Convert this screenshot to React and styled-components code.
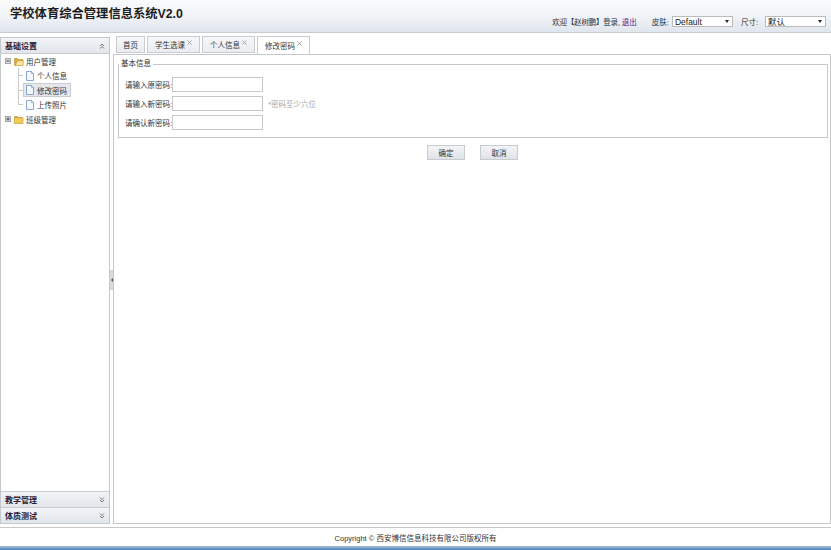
import React from "react";
import styled, { createGlobalStyle } from "styled-components";

const FONT = `"Liberation Sans", "Noto Sans CJK SC", sans-serif`;

const Global = createGlobalStyle`
  html, body { margin: 0; padding: 0; background: #fff; }
  body { font: 7.5px ${FONT}; color: #333; }
  * { box-sizing: border-box; }
`;

const Page = styled.div`
  width: 831px;
  height: 550px;
  display: flex;
  flex-direction: column;
  overflow: hidden;
`;

const Header = styled.header`
  flex: 0 0 33px;
  display: flex;
  justify-content: space-between;
  padding: 0 5px 0 10px;
  background: linear-gradient(#fafbfc, #f3f5f8 40%, #e0e6ee);
  border-bottom: 1px solid #c8ccd0;
`;

const Title = styled.h1`
  margin: 5px 0 0;
  font-size: 12.3px;
  line-height: 18px;
  font-weight: bold;
  color: #1c1c1c;
`;

const Status = styled.div`
  display: flex;
  align-items: center;
  align-self: flex-end;
  height: 11px;
  margin-bottom: 5px;
  color: #333;
`;

const Welcome = styled.span`
  letter-spacing: -0.2px;
`;

const Exit = styled.a`
  color: #551a8b;
  margin-left: 2px;
`;

const Skin = styled.span`
  margin-left: ${(p) => p.$gap}px;
  margin-right: ${(p) => p.$after}px;
`;

const PickerWrap = styled.span`
  position: relative;
  display: block;
  width: 61px;
  height: 11px;
  &::after {
    content: "";
    position: absolute;
    right: 4px;
    top: 4px;
    border-style: solid;
    border-width: 3px 2px 0;
    border-color: #222 transparent transparent;
    pointer-events: none;
  }
`;

const Picker = styled.select`
  display: block;
  appearance: none;
  width: 100%;
  height: 100%;
  padding: 0 0 0 2px;
  font: 8.5px ${FONT};
  color: #222;
  background: #fff;
  border: 1px solid #bbb;
  border-radius: 0;
`;

const Main = styled.main`
  flex: 1;
  min-height: 0;
  display: flex;
  padding: 3px 0;
`;

const Sidebar = styled.aside`
  flex: 0 0 110px;
  margin-top: 1px;
  display: flex;
  flex-direction: column;
  border: 1px solid #c4c7cb;
  background: #fff;
`;

const AccHead = styled.div`
  flex: 0 0 16px;
  display: flex;
  align-items: center;
  justify-content: space-between;
  padding: 0 4px 0 4px;
  font-size: 8px;
  font-weight: bold;
  color: #2b2238;
  background: linear-gradient(#f2f4f6, #e1e6eb);
  border-top: ${(p) => (p.$ruled ? "1px solid #c8cbcf" : "0")};
  border-bottom: ${(p) => (p.$open ? "1px solid #c8cbcf" : "0")};
`;

const Tree = styled.ul`
  flex: 1;
  margin: 0;
  padding: 0 0 0 3px;
  list-style: none;
`;

const TreeRow = styled.li`
  height: 14.5px;
  display: flex;
  align-items: center;
  color: #333;
`;

const Selected = styled.span`
  display: flex;
  align-items: center;
  gap: 3px;
  height: 14px;
  padding: 0 4px 0 3px;
  background: ${(p) => (p.$active ? "#e6e7ec" : "transparent")};
  outline: ${(p) => (p.$active ? "1px solid #c9ccd3" : "none")};
  outline-offset: -1px;
`;

const Splitter = styled.div`
  flex: 0 0 3px;
  display: flex;
  align-items: center;
`;

const Handle = styled.div`
  width: 3px;
  height: 20px;
  background: #d8d8d8;
  display: flex;
  align-items: center;
  justify-content: center;
  &::after {
    content: "";
    border: 2px solid transparent;
    border-right: 2px solid #555;
    border-left: 0;
  }
`;

const Content = styled.section`
  flex: 1;
  display: flex;
  flex-direction: column;
  min-width: 0;
`;

const TabBar = styled.nav`
  flex: 0 0 17px;
  display: flex;
  gap: 2px;
  padding-left: 3px;
  position: relative;
  z-index: 1;
`;

const Tab = styled.div`
  height: ${(p) => (p.$active ? 18 : 17)}px;
  display: flex;
  align-items: center;
  justify-content: ${(p) => (p.$plain ? "center" : "flex-start")};
  width: ${(p) => (p.$plain ? 29 : 53)}px;
  padding-left: ${(p) => (p.$plain ? 0 : 7)}px;
  color: #333;
  border: 1px solid #c8cbcf;
  border-bottom: ${(p) => (p.$active ? "0" : "1px solid #c8cbcf")};
  background: ${(p) => (p.$active ? "#fff" : "linear-gradient(#f6f7f9, #e9ecf0)")};
`;

const Close = styled.svg`
  width: 5px;
  height: 5px;
  margin: -4px 0 0 2px;
  stroke: #a5a5a5;
  stroke-width: 1;
  fill: none;
`;

const Panel = styled.div`
  flex: 1;
  border: 1px solid #c4c7cb;
  padding: 4px 2px 0 4px;
  background: #fff;
`;

const Fieldset = styled.fieldset`
  margin: 0;
  padding: 8px 0 0 6px;
  height: 79px;
  border: 1px solid #c4c7cb;
  min-width: 0;
`;

const Legend = styled.legend`
  margin-left: -6px;
  padding: 0 2px;
  color: #333;
  line-height: 10px;
`;

const FormRow = styled.div`
  display: flex;
  align-items: center;
  height: 15px;
  margin-bottom: 4px;
  color: #333;
`;

const Label = styled.label`
  width: 47px;
  white-space: nowrap;
`;

const Field = styled.input`
  width: 91px;
  height: 15px;
  padding: 0 2px;
  border: 1px solid #c4c7cb;
  background: #fff;
`;

const Hint = styled.span`
  margin-left: 5px;
  color: #a8a8a8;
`;

const Actions = styled.div`
  display: flex;
  justify-content: center;
  gap: 15px;
  margin-top: 7px;
  padding-right: 1px;
`;

const Btn = styled.button`
  width: 38px;
  height: 15px;
  padding: 0;
  font: 7.5px ${FONT};
  color: #333;
  border: 1px solid #c8cbcf;
  background: linear-gradient(#f3f4f6, #dfe3e8);
`;

const Footer = styled.footer`
  flex: 0 0 19px;
  display: flex;
  align-items: center;
  justify-content: center;
  padding-top: 1px;
  border-top: 1px solid #c8c8c8;
  color: #333;
  background: #fff;
`;

const Strip = styled.div`
  flex: 0 0 4px;
  background: linear-gradient(#a9c2dc, #4f81b8);
`;

const Chevrons = ({ up }) => (
  <svg width="6" height="6" viewBox="0 0 6 6" fill="none" stroke="#777" strokeWidth="1">
    {up ? (
      <path d="M1 3l2-2 2 2M1 5.5l2-2 2 2" />
    ) : (
      <path d="M1 .5l2 2 2-2M1 3l2 2 2-2" />
    )}
  </svg>
);

const Expander = ({ open }) => (
  <svg width="8" height="8" viewBox="0 0 8 8" style={{ flex: "none" }}>
    <rect x="1.5" y="1.5" width="5" height="5" fill="#d9dcdf" stroke="#a5a5a5" />
    <path d={open ? "M2.5 4h3" : "M2.5 4h3M4 2.5v3"} stroke="#444" fill="none" />
  </svg>
);

const Folder = ({ open }) => (
  <svg width="10" height="9" viewBox="0 0 10 9" style={{ margin: "0 2px 0 2px", flex: "none" }}>
    <path d="M.5 1.5h3l1 1h4.5v6H.5z" fill="#d9ad3f" stroke="#b98f30" strokeWidth=".6" />
    <path
      d={open ? "M1.5 8.5l2-4.5h6.2l-1.5 4.5z" : "M.8 3.2h8v5H.8z"}
      fill={open ? "#fbe7a4" : "#f0cb55"}
      stroke={open ? "#c9a44a" : "none"}
      strokeWidth=".5"
    />
  </svg>
);

const Elbow = ({ last }) => (
  <svg width="19" height="15" viewBox="0 0 19 15" style={{ flex: "none" }}>
    <path d={last ? "M14.5 0v7.5h4.5" : "M14.5 0v15M14.5 7.5h4.5"} stroke="#c8c8c8" fill="none" />
  </svg>
);

const Doc = () => (
  <svg width="8" height="10" viewBox="0 0 8 10" style={{ flex: "none" }}>
    <path d="M.5.5h5l2 2v7h-7z" fill="#f4f8fd" stroke="#6d93c4" strokeWidth=".8" />
    <path d="M5.5.5v2h2" fill="#cfe0f3" stroke="#6d93c4" strokeWidth=".6" />
  </svg>
);

const X = () => (
  <Close viewBox="0 0 5 5">
    <path d="M.5.5l4 4M4.5.5l-4 4" />
  </Close>
);

const children = [
  { name: "个人信息" },
  { name: "修改密码", active: true },
  { name: "上传照片", last: true },
];

const fields = [
  { label: "请输入原密码:" },
  { label: "请输入新密码:", hint: "*密码至少六位" },
  { label: "请确认新密码:" },
];

export default function App() {
  return (
    <Page>
      <Global />
      <Header>
        <Title>学校体育综合管理信息系统V2.0</Title>
        <Status>
          <Welcome>欢迎【赵树鹏】登录,</Welcome>
          <Exit>退出</Exit>
          <Skin $gap={15} $after={3}>皮肤:</Skin>
          <PickerWrap>
            <Picker defaultValue="Default">
              <option>Default</option>
            </Picker>
          </PickerWrap>
          <Skin $gap={8} $after={7}>尺寸:</Skin>
          <PickerWrap>
            <Picker defaultValue="默认">
              <option>默认</option>
            </Picker>
          </PickerWrap>
        </Status>
      </Header>
      <Main>
        <Sidebar>
          <AccHead $open>
            基础设置
            <Chevrons up />
          </AccHead>
          <Tree>
            <TreeRow>
              <Expander open />
              <Folder open />
              用户管理
            </TreeRow>
            {children.map((c) => (
              <TreeRow key={c.name}>
                <Elbow last={c.last} />
                <Selected $active={c.active}>
                  <Doc />
                  {c.name}
                </Selected>
              </TreeRow>
            ))}
            <TreeRow>
              <Expander />
              <Folder />
              班级管理
            </TreeRow>
          </Tree>
          <AccHead $ruled>
            教学管理
            <Chevrons />
          </AccHead>
          <AccHead $ruled>
            体质测试
            <Chevrons />
          </AccHead>
        </Sidebar>
        <Splitter>
          <Handle />
        </Splitter>
        <Content>
          <TabBar>
            <Tab $plain>首页</Tab>
            <Tab>学生选课<X /></Tab>
            <Tab>个人信息<X /></Tab>
            <Tab $active>修改密码<X /></Tab>
          </TabBar>
          <Panel>
            <Fieldset>
              <Legend>基本信息</Legend>
              {fields.map((f) => (
                <FormRow key={f.label}>
                  <Label>{f.label}</Label>
                  <Field type="password" />
                  {f.hint && <Hint>{f.hint}</Hint>}
                </FormRow>
              ))}
            </Fieldset>
            <Actions>
              <Btn>确定</Btn>
              <Btn>取消</Btn>
            </Actions>
          </Panel>
        </Content>
      </Main>
      <Footer>Copyright © 西安博信信息科技有限公司版权所有</Footer>
      <Strip />
    </Page>
  );
}
